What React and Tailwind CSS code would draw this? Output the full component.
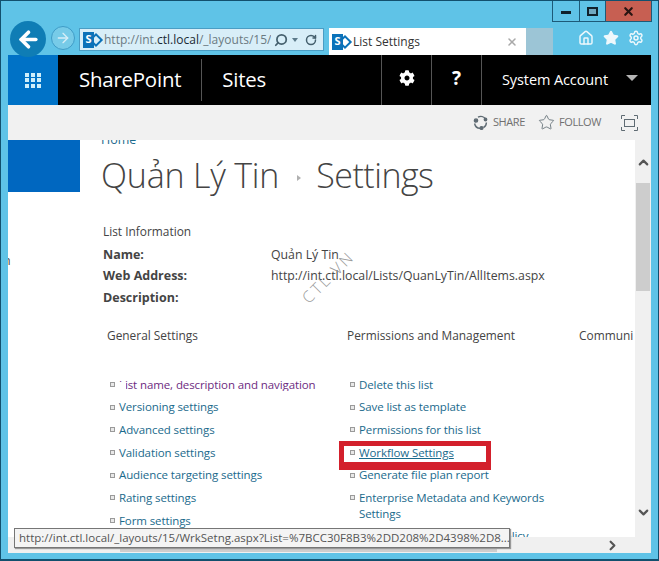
import { ArrowLeft, ArrowRight, ChevronDown, ChevronRight, ChevronUp, Home, RotateCw, Search, Settings, Star, X } from 'lucide-react'
import { FaCog } from 'react-icons/fa'

const generalLinks = [
  'Versioning settings',
  'Advanced settings',
  'Validation settings',
  'Audience targeting settings',
  'Rating settings',
  'Form settings',
]

const permissionLinks = ['Delete this list', 'Save list as template', 'Permissions for this list']

function SpLogo() {
  return (
    <span className="relative flex h-[16px] w-[17px] shrink-0 items-center">
      <span className="absolute left-[8px] top-[3px] h-[10px] w-[10px] rotate-45 border-2 border-[#0b72b9]" />
      <span className="relative flex h-[16px] w-[11px] items-center justify-center bg-[#0b72b9] text-[11px] font-bold text-white">S</span>
    </span>
  )
}

function Bullet({ className = '' }) {
  return <span className={`mr-[4px] h-[5px] w-[5px] shrink-0 border border-[#9a9a9a] bg-[#e8e8e8] ${className}`} />
}

function LinkItem({ children, underline }) {
  return (
    <li className="flex h-[22.7px] items-center">
      <Bullet />
      <a className={`text-[11.5px] tracking-[-0.1px] text-[#1a6a8c] ${underline ? 'underline' : ''}`}>{children}</a>
    </li>
  )
}

export default function App() {
  return (
    <div className="relative flex h-[561px] w-[659px] flex-col overflow-hidden border-t border-[#12506e] bg-[#5fc3e7] font-['Open_Sans','Liberation_Sans',sans-serif] text-[#444] shadow-[inset_1px_0_0_#12506e,inset_-1px_0_0_#12506e,inset_0_-2px_0_#12506e]">
      {/* window buttons */}
      <div className="flex h-[21px] justify-end pr-[7px]">
        <div className="flex h-[21px] border border-t-0 border-[#1d5a78]">
          <div className="flex w-[27px] items-center justify-center border-r border-[#1d5a78]">
            <span className="mt-[3px] h-[3px] w-[10px] bg-[#10222c]" />
          </div>
          <div className="flex w-[26px] items-center justify-center border-r border-[#1d5a78]">
            <span className="h-[9px] w-[11px] border-2 border-[#10222c] bg-[#6fa8c0]" />
          </div>
          <div className="flex w-[45px] items-center justify-center bg-[#c75f52]">
            <X size={13} strokeWidth={4} className="text-[#2a1512]" />
          </div>
        </div>
      </div>

      {/* browser toolbar */}
      <div className="relative z-10 flex h-[33px] items-end pl-[10px]">
        <div className="mb-[-2px] flex h-[36px] w-[36px] shrink-0 items-center justify-center rounded-full bg-[#0f7db5]">
          <ArrowLeft size={25} strokeWidth={3.5} className="text-white" />
        </div>
        <div className="mb-[5px] ml-[5px] flex h-[24px] w-[24px] shrink-0 items-center justify-center rounded-full border border-[#3f9cc7] bg-[#77cbe8]">
          <ArrowRight size={16} strokeWidth={2} className="text-[#d7eef7]" />
        </div>
        <div className="mb-[4px] ml-[4px] flex h-[23px] w-[245px] shrink-0 items-center border border-[#4a9dc4] bg-[#d8eef8] pl-[3px] text-[12px] text-[#6b7a82]">
          <SpLogo />
          <span className="ml-[4px] w-[167px] overflow-hidden whitespace-nowrap">
            http://int.<span className="text-[#1b2a33]">ctl.local</span>/_layouts/15/l
          </span>
          <Search size={14} strokeWidth={3} className="ml-[3px] -scale-x-100 text-[#45606e]" />
          <span className="ml-[4px] h-0 w-0 border-x-[3px] border-t-[4px] border-x-transparent border-t-[#5b7a8a]" />
          <RotateCw size={12} strokeWidth={3} className="ml-[7px] text-[#45606e]" />
        </div>
        <div className="ml-[5px] flex h-[27px] w-[197px] shrink-0 items-center bg-white pl-[3px] text-[12px] text-[#333]">
          <SpLogo />
          <span className="ml-[4px] flex-1">List Settings</span>
          <X size={12} strokeWidth={3} className="mr-[8px] text-[#a9a9a9]" />
        </div>
        <div className="h-[27px] w-[27px] shrink-0 bg-[#9cc5d6]" />
        <div className="mb-[9px] ml-[25px] flex items-center gap-[9px] text-[#eef8fc]">
          <Home size={16} strokeWidth={2.2} />
          <Star size={16} fill="currentColor" />
          <Settings size={16} strokeWidth={2.2} />
        </div>
      </div>

      {/* sharepoint suite bar */}
      <div className="mx-[8px] flex h-[50px] shrink-0 items-stretch bg-black text-white">
        <div className="flex w-[50px] items-center justify-center bg-[#0072c6]">
          <div className="grid w-[16px] grid-cols-3 gap-[1.5px]">
            {Array.from({ length: 9 }).map((_, i) => (
              <span key={i} className="h-[4px] w-[4px] bg-[#cfeefa]" />
            ))}
          </div>
        </div>
        <span className="ml-[21px] self-center pb-[1px] text-[20.4px] tracking-[-0.2px]">SharePoint</span>
        <span className="ml-[20px] my-[4px] w-px bg-[#555]" />
        <span className="ml-[20px] self-center pb-[1px] text-[20.4px] tracking-[-0.2px]">Sites</span>
        <div className="ml-auto flex">
          <div className="flex w-[50px] items-center justify-center border-l border-[#555]">
            <FaCog size={16} className="mb-[4px]" />
          </div>
          <div className="flex w-[50px] items-center justify-center border-l border-[#555] pb-[4px] text-[19px] font-bold">?</div>
          <div className="flex w-[170px] items-center border-l border-[#555] pl-[20px] text-[14.5px] tracking-[-0.1px]">
            System Account
            <span className="ml-[18px] mb-[4px] h-0 w-0 border-x-[6px] border-t-[6px] border-x-transparent border-t-[#b5b5b5]" />
          </div>
        </div>
      </div>

      {/* share / follow */}
      <div className="mx-[8px] flex h-[35px] shrink-0 items-center justify-end bg-[#f1f1f1] pr-[13px] text-[11px] tracking-[-0.4px] text-[#707070]">
        <svg width="15" height="15" viewBox="0 0 15 15" fill="none" stroke="#5f6b73" strokeWidth="1.4">
          <path d="M5 2.2A6 6 0 0 1 12.6 4M13.4 7.5a6 6 0 0 1-3 5.2M7 13.4A6 6 0 0 1 1.6 8.5" />
          <circle cx="3" cy="5.5" r="1.6" fill="#5f6b73" />
          <circle cx="12.5" cy="4.5" r="1.2" fill="#5f6b73" />
          <circle cx="8.5" cy="13" r="1.4" fill="#5f6b73" />
        </svg>
        <span className="ml-[5px]">SHARE</span>
        <Star size={17} strokeWidth={1.2} className="ml-[13px] text-[#5f6b73]" />
        <span className="ml-[4px]">FOLLOW</span>
        <svg className="ml-[20px]" width="17" height="16" viewBox="0 0 17 16" fill="none" stroke="#5f6b73" strokeWidth="1">
          <path d="M.5 4V.5H4M13 .5h3.5V4M16.5 12v3.5H13M4 15.500H.5V12" />
          <rect x="3.5" y="4.500" width="10" height="7" />
        </svg>
      </div>

      {/* page */}
      <div className="mx-[8px] flex h-[397px] shrink-0">
        <div className="flex h-full w-[627px] overflow-hidden bg-white">
          <div className="w-[72px] shrink-0">
            <div className="h-[52px] bg-[#0067c0]" />
            <div className="mt-[60px] text-[12.5px] text-[#444]">
              <div className="-ml-[5px]">n</div>
            </div>
          </div>

          <div className="ml-[21px] w-[534px] shrink-0">
            <div className="-mt-[8px] h-[15px] text-[12.5px] leading-[15px] text-[#1a6a8c]">Home</div>
            <h1 className="mt-[5px] flex h-[46px] items-center whitespace-nowrap text-[34px] font-light tracking-[-0.2px] text-[#444]">
              Quản Lý Tin
              <span className="ml-[18px] mr-[15px] mt-[6px] h-0 w-0 border-y-[3px] border-l-[4px] border-y-transparent border-l-[#b0b0b0]" />
              <span className="tracking-[-0.5px]">Settings</span>
            </h1>

            <div className="ml-[2px] mt-[23px] text-[12.300px] leading-[21.500px]">
              <p className="text-[11.9px]">List Information</p>
              <div className="mt-[1px] grid grid-cols-[168px_1fr] text-[#444]">
                <span className="text-[12.500px] font-bold">Name:</span>
                <span>Quản Lý Tin</span>
                <span className="text-[12.500px] font-bold">Web Address:</span>
                <span>http://int.ctl.local/Lists/QuanLyTin/AllItems.aspx</span>
                <span className="text-[12.500px] font-bold">Description:</span>
                <span />
              </div>
            </div>

            <div className="mt-[15px] grid grid-cols-[240px_232px_62px] text-[11.9px]">
              <h2 className="ml-[6px] h-[50px] leading-[24px]">General Settings</h2>
              <h2 className="ml-[6px] leading-[24px]">Permissions and Management</h2>
              <h2 className="ml-[6px] whitespace-nowrap leading-[24px]">Communi</h2>

              <ul className="ml-[9px]">
                <li className="flex h-[22.7px] items-center">
                  <Bullet />
                  <a className="relative h-[14px] overflow-hidden whitespace-nowrap text-[11.5px] leading-[15px] tracking-[-0.1px] text-[#6d2b7f]">
                    List name, description and navigation
                    <span className="absolute left-0 top-[5px] h-[9px] w-[7px] bg-white" />
                  </a>
                </li>
                {generalLinks.map((label) => (
                  <LinkItem key={label}>{label}</LinkItem>
                ))}
              </ul>
              <ul className="ml-[9px]">
                {permissionLinks.map((label) => (
                  <LinkItem key={label}>{label}</LinkItem>
                ))}
                <LinkItem underline>Workflow Settings</LinkItem>
                <LinkItem>Generate file plan report</LinkItem>
                <li className="flex items-start pt-[4px]">
                  <Bullet className="mt-[5px]" />
                  <a className="w-[190px] text-[11.5px] leading-[16px] tracking-[-0.1px] text-[#1a6a8c]">Enterprise Metadata and Keywords Settings</a>
                </li>
                <li className="flex items-start pt-[6px]">
                  <Bullet className="mt-[5px]" />
                  <a className="w-[190px] text-[11.5px] leading-[16px] tracking-[-0.1px] text-[#1a6a8c]">Information management policy settings</a>
                </li>
              </ul>
            </div>
          </div>
        </div>

        {/* vertical scrollbar */}
        <div className="flex w-[16px] shrink-0 flex-col items-center bg-[#f0f0f0] text-[#555]">
          <ChevronUp size={15} strokeWidth={3.5} className="mt-[15px]" />
          <div className="mt-[13px] h-[108px] w-[14px] bg-[#cdcdcd]" />
          <ChevronDown size={15} strokeWidth={3.5} className="mt-[214px]" />
        </div>
      </div>

      {/* horizontal scrollbar */}
      <div className="mx-[8px] flex h-[16px] shrink-0 items-center bg-[#f0f0f0] text-[#555]">
        <div className="ml-[112px] h-[14px] w-[377px] bg-[#cdcdcd]" />
        <ChevronRight size={15} strokeWidth={3.5} className="ml-[108px]" />
      </div>

      {/* overlays */}
      <div className="absolute left-[339px] top-[440px] h-[29px] w-[152px] border-[5px] border-b-[8px] border-[#d3202c]" />
      <div className="absolute left-[281px] top-[266px] w-[94px] -rotate-45 text-center text-[16px] font-light leading-[20px] tracking-[2.5px] text-[#999]">CTL.VN</div>
      <div className="absolute left-[14px] top-[527px] flex h-[20px] w-[496px] items-center whitespace-nowrap border border-[#767676] bg-[#f4f4f4] pl-[4px] text-[11.5px] text-[#555] shadow-[1px_1px_1px_#999]">
        http://int.ctl.local/_layouts/15/WrkSetng.aspx?List=%7BCC30F8B3%2DD208%2D4398%2D8...
      </div>
    </div>
  )
}
